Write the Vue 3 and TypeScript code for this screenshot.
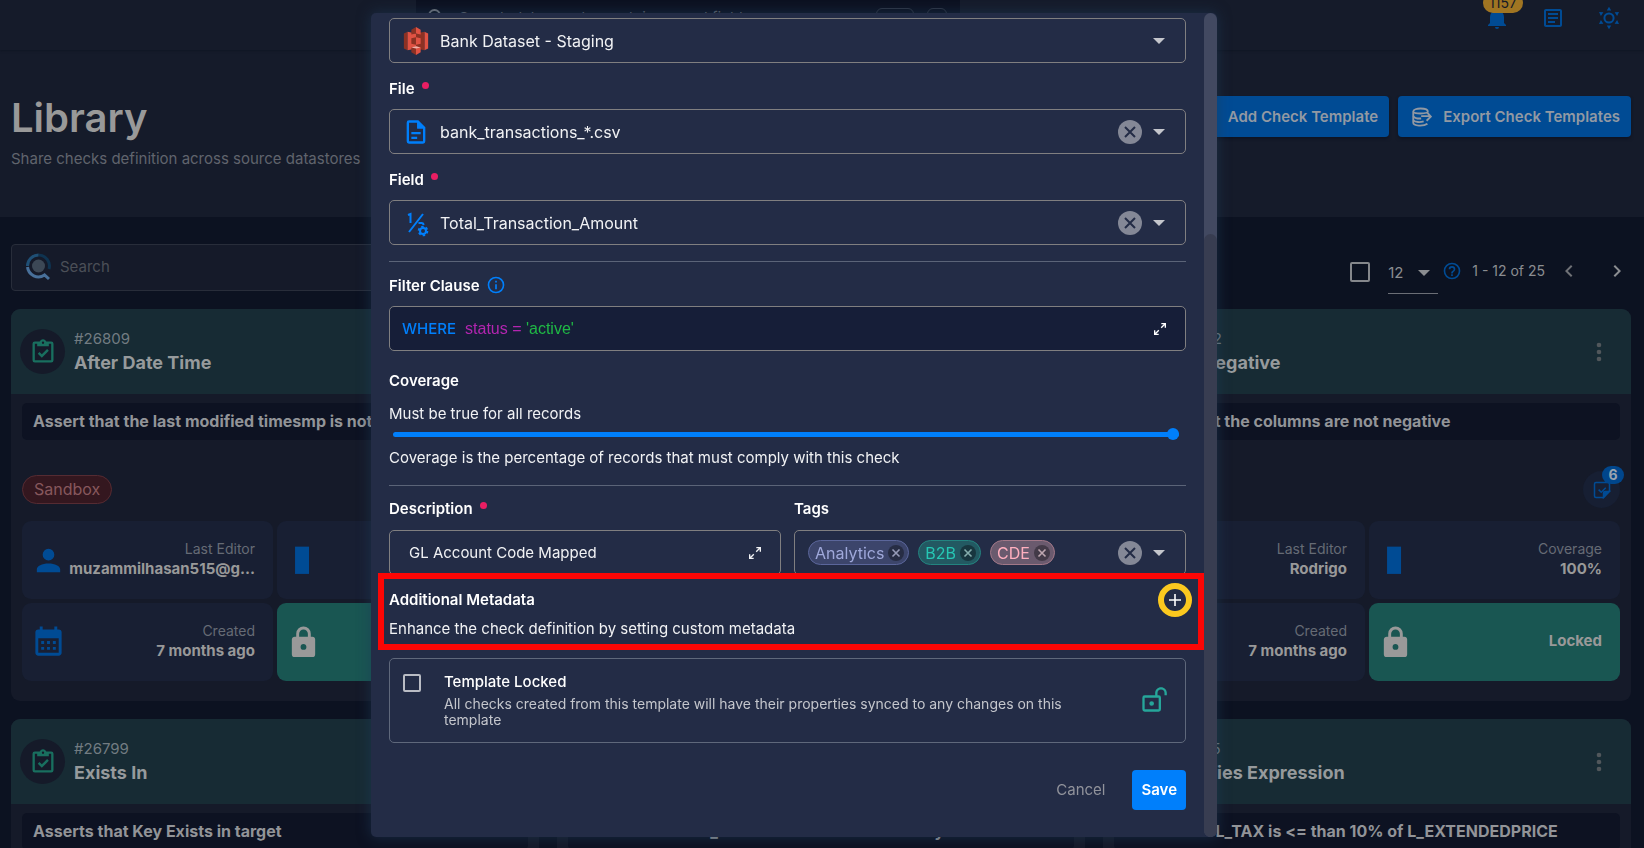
<script setup lang="ts">
import { ref } from 'vue'

interface Tile {
  icon: 'account' | 'bar' | 'calendar' | 'lock'
  label?: string
  value: string
  locked?: boolean
}

interface CheckCard {
  id: string
  title: string
  text: string
  tag?: string
  count?: number
  tiles: Tile[]
}

interface Tag {
  name: string
  tone: string
}

const icons = {
  account: 'M12,4A4,4 0 0,1 16,8A4,4 0 0,1 12,12A4,4 0 0,1 8,8A4,4 0 0,1 12,4M12,14C16.42,14 20,15.79 20,18V20H4V18C4,15.79 7.58,14 12,14Z',
  calendar: 'M7,11H9V13H7V11M21,5V19C21,20.11 20.11,21 19,21H5C3.89,21 3,20.1 3,19V5A2,2 0 0,1 5,3H6V1H8V3H16V1H18V3H19A2,2 0 0,1 21,5M5,19H19V9H5V19M15,13V11H17V13H15M11,13V11H13V13H11M7,15H9V17H7V15M15,17V15H17V17H15M11,17V15H13V17H11Z',
  lock: 'M12,17A2,2 0 0,0 14,15C14,13.89 13.1,13 12,13A2,2 0 0,0 10,15A2,2 0 0,0 12,17M18,8A2,2 0 0,1 20,10V20A2,2 0 0,1 18,22H6A2,2 0 0,1 4,20V10C4,8.89 4.9,8 6,8H7V6A5,5 0 0,1 12,1A5,5 0 0,1 17,6V8H18M12,3A3,3 0 0,0 9,6V8H15V6A3,3 0 0,0 12,3Z',
  bar: 'M6.2 2.5H15.8V21.2H6.2Z',
  clipboard: 'M19,3H14.82C14.4,1.84 13.3,1 12,1C10.7,1 9.6,1.84 9.18,3H5A2,2 0 0,0 3,5V19A2,2 0 0,0 5,21H19A2,2 0 0,0 21,19V5A2,2 0 0,0 19,3M12,3A1,1 0 0,1 13,4A1,1 0 0,1 12,5A1,1 0 0,1 11,4A1,1 0 0,1 12,3M7,7H17V5H19V19H5V5H7V7M7.5,13.5L9,12L11,14L15.5,9.5L17,11L11,17L7.5,13.5Z',
  dots: 'M12,16A2,2 0 0,1 14,18A2,2 0 0,1 12,20A2,2 0 0,1 10,18A2,2 0 0,1 12,16M12,10A2,2 0 0,1 14,12A2,2 0 0,1 12,14A2,2 0 0,1 10,12A2,2 0 0,1 12,10M12,4A2,2 0 0,1 14,6A2,2 0 0,1 12,8A2,2 0 0,1 10,6A2,2 0 0,1 12,4Z',
  expand: 'M10,21V19H6.41L10.91,14.5L9.5,13.09L5,17.59V14H3V21H10M14.5,10.91L19,6.41V10H21V3H14V5H17.59L13.09,9.5L14.5,10.91Z',
  bell: 'M21,19V20H3V19L5,17V11C5,7.9 7.03,5.17 10,4.29V4A2,2 0 0,1 14,4V4.29C16.97,5.17 19,7.9 19,11V17L21,19M14,21A2,2 0 0,1 10,21',
  news: 'M5,3C3.89,3 3,3.89 3,5V19C3,20.11 3.89,21 5,21H19C20.11,21 21,20.11 21,19V5C21,3.89 20.11,3 19,3H5M5,5H19V19H5V5M7,7V9H17V7H7M7,11V13H17V11H7M7,15V17H14V15H7Z',
  unlock: 'M18,1C15.24,1 13,3.24 13,6V8H4A2,2 0 0,0 2,10V20A2,2 0 0,0 4,22H16A2,2 0 0,0 18,20V10A2,2 0 0,0 16,8H15V6A3,3 0 0,1 18,3A3,3 0 0,1 21,6V8H23V6C23,3.24 20.76,1 18,1M4,10H16V20H4V10M10,13A2,2 0 0,0 8,15A2,2 0 0,0 10,17A2,2 0 0,0 12,15A2,2 0 0,0 10,13Z',
  info: 'M11,9H13V7H11M12,20C7.59,20 4,16.41 4,12C4,7.59 7.59,4 12,4C16.41,4 20,7.59 20,12C20,16.41 16.41,20 12,20M12,2A10,10 0 0,0 2,12A10,10 0 0,0 12,22A10,10 0 0,0 22,12A10,10 0 0,0 12,2M11,17H13V11H11V17Z',
  help: 'M11,18H13V16H11V18M12,2A10,10 0 0,0 2,12A10,10 0 0,0 12,22A10,10 0 0,0 22,12A10,10 0 0,0 12,2M12,20C7.59,20 4,16.41 4,12C4,7.59 7.59,4 12,4C16.41,4 20,7.59 20,12C20,16.41 16.41,20 12,20M12,6A4,4 0 0,0 8,10H10A2,2 0 0,1 12,8A2,2 0 0,1 14,10C14,12 11,11.75 11,15H13C13,12.75 16,12.5 16,10A4,4 0 0,0 12,6Z',
  file: 'M6,2A2,2 0 0,0 4,4V20A2,2 0 0,0 6,22H18A2,2 0 0,0 20,20V8L14,2H6M6,4H13V9H18V20H6V4M8,12V14H16V12H8M8,16V18H13V16H8Z',
  left: 'M15.41,16.58L10.83,12L15.41,7.41L14,6L8,12L14,18L15.41,16.58Z',
  right: 'M8.59,16.58L13.17,12L8.59,7.41L10,6L16,12L10,18L8.59,16.58Z',
  magnify: 'M9.5,3A6.5,6.5 0 0,1 16,9.5C16,11.11 15.41,12.59 14.44,13.73L14.71,14H15.5L20.5,19L19,20.5L14,15.5V14.71L13.73,14.44C12.59,15.41 11.11,16 9.5,16A6.5,6.5 0 0,1 3,9.5A6.5,6.5 0 0,1 9.5,3M9.5,5C7,5 5,7 5,9.5C5,12 7,14 9.5,14C12,14 14,12 14,9.5C14,7 12,5 9.5,5Z',
}

const makeTiles = (editor: string): Tile[] => [
  { icon: 'account', label: 'Last Editor', value: editor },
  { icon: 'bar', label: 'Coverage', value: '100%' },
  { icon: 'calendar', label: 'Created', value: '7 months ago' },
  { icon: 'lock', value: 'Locked', locked: true },
]

const cards: CheckCard[] = [
  { id: '#26809', title: 'After Date Time', text: 'Assert that the last modified timesmp is not after today', tag: 'Sandbox', tiles: makeTiles('muzammilhasan515@g...') },
  { id: '#26806', title: 'Between', text: 'Asserts that values are between the range', tiles: makeTiles('Rodrigo') },
  { id: '#26802', title: 'Not Negative', text: 'Asserts that the columns are not negative', count: 6, tiles: makeTiles('Rodrigo') },
  { id: '#26799', title: 'Exists In', text: 'Asserts that Key Exists in target', tiles: makeTiles('Rodrigo') },
  { id: '#26797', title: 'Expected Values', text: 'Assert that the O_ORDERSTATUS contains only known values', tiles: makeTiles('Rodrigo') },
  { id: '#26795', title: 'Satisfies Expression', text: 'Assert that L_TAX is <= than 10% of L_EXTENDEDPRICE', tiles: makeTiles('Rodrigo') },
]

const tags = ref<Tag[]>([
  { name: 'Analytics', tone: 'indigo' },
  { name: 'B2B', tone: 'teal' },
  { name: 'CDE', tone: 'rose' },
])

const query = ref('')
const globalQuery = ref('')
const perPage = ref('12')
const selectAll = ref(false)
const dataset = ref('Bank Dataset - Staging')
const file = ref('bank_transactions_*.csv')
const field = ref('Total_Transaction_Amount')
const coverage = ref(100)
const description = ref('GL Account Code Mapped')
const locked = ref(false)

const removeTag = (name: string) => {
  tags.value = tags.value.filter((t) => t.name !== name)
}
</script>

<template>
  <div class="page">
    <header class="topbar">
      <div class="global">
        <svg class="i24" viewBox="0 0 24 24"><path :d="icons.magnify" /></svg>
        <input v-model="globalQuery" type="text" aria-label="Global search" placeholder="Search data assets, containers and fields" />
        <kbd>Ctrl</kbd><kbd>K</kbd>
      </div>
      <nav class="actions">
        <button type="button" aria-label="Notifications" class="bell">
          <svg class="i24" viewBox="0 0 24 24"><path :d="icons.bell" /></svg>
          <span class="alerts">1157</span>
        </button>
        <button type="button" aria-label="News">
          <svg class="i24" viewBox="0 0 24 24"><path :d="icons.news" /></svg>
        </button>
        <button type="button" aria-label="Theme">
          <svg class="i24" viewBox="0 0 24 24">
            <circle cx="12" cy="12" r="4.6" fill="none" stroke="currentColor" stroke-width="2" />
            <path d="M12 .8L14.2 4.4H9.8ZM12 23.2L14.2 19.6H9.8ZM2 6L6.4 6.2L3.9 10ZM22 6L17.6 6.2L20.1 10ZM2 18L6.4 17.8L3.9 14ZM22 18L17.6 17.8L20.1 14Z" />
          </svg>
        </button>
      </nav>
    </header>

    <section class="hero">
      <div>
        <h1>Library</h1>
        <p>Share checks definition across source datastores</p>
      </div>
      <div class="hero-buttons">
        <button type="button" class="primary">
          <svg class="i20" viewBox="0 0 24 24"><path d="M11 4h2v7h7v2h-7v7h-2v-7H4v-2h7z" /></svg>
          Add Check Template
        </button>
        <button type="button" class="primary">
          <svg class="i20" viewBox="0 0 24 24" fill="none" stroke="currentColor" stroke-width="2.2">
            <path d="M1.500 5.500C1.500 .5 19 .5 19 5.500C19 8.500 1.500 8.500 1.500 5.500V19C1.500 23 14 23.500 18.500 20" />
            <path d="M1.500 11C3 13.500 7 14 11 13.800M1.500 16C4 18.500 10 18.500 14 17.200M11 11H22M18 6.500L22.500 11.500L17.500 16.500" />
          </svg>
          Export Check Templates
        </button>
      </div>
    </section>

    <main class="library">
      <div class="toolbar">
        <label class="search">
          <svg class="logo" viewBox="0 0 26 28">
            <circle cx="12.500" cy="13" r="6.500" fill="#3c4856" />
            <path d="M12.500 2A11 11 0 0 1 23 16" fill="none" stroke="#0f3350" stroke-width="3" />
            <path d="M1.500 13A11 11 0 0 1 12.500 2" fill="none" stroke="#1f4f75" stroke-width="3" />
            <path d="M1.500 14A11 11 0 0 0 18.500 22L23 26" fill="none" stroke="#48709a" stroke-width="3" />
          </svg>
          <input v-model="query" type="text" placeholder="Search" aria-label="Search" />
        </label>
        <div class="pager">
          <input v-model="selectAll" type="checkbox" class="box box-lg" aria-label="Select all" />
          <label class="per-page">
            <select v-model="perPage" aria-label="Items per page"><option>12</option><option>24</option></select>
            <span class="caret"></span>
          </label>
          <svg class="i20 help" viewBox="0 0 24 24"><path :d="icons.help" /></svg>
          <span class="range">1 - 12 of 25</span>
          <button type="button" aria-label="Previous" class="prev"><svg class="i24" viewBox="0 0 24 24"><path :d="icons.left" /></svg></button>
          <button type="button" aria-label="Next"><svg class="i24" viewBox="0 0 24 24"><path :d="icons.right" /></svg></button>
        </div>
      </div>

      <div class="grid">
        <article v-for="card in cards" :key="card.id" class="card">
          <header>
            <span class="avatar"><svg viewBox="0 0 24 24"><path :d="icons.clipboard" /></svg></span>
            <div class="heading">
              <span>{{ card.id }}</span>
              <h2>{{ card.title }}</h2>
            </div>
            <button type="button" aria-label="More"><svg viewBox="0 0 24 24"><path :d="icons.dots" /></svg></button>
          </header>
          <div class="card-body">
            <p class="statement">{{ card.text }}</p>
            <div class="meta">
              <span v-if="card.tag" class="sandbox">{{ card.tag }}</span>
              <span v-if="card.count" class="checks">
                <svg viewBox="0 0 24 24" fill="none" stroke="currentColor" stroke-width="2">
                  <path d="M22 13V4a2 2 0 0 0-2-2H4a2 2 0 0 0-2 2v16a2 2 0 0 0 2 2h10zM7.500 11.500L11 15l6-6" />
                  <path d="M14 22v-6a2 2 0 0 1 2-2h6z" fill="currentColor" />
                </svg>
                <b>{{ card.count }}</b>
              </span>
            </div>
            <div class="tiles">
              <div v-for="tile in card.tiles" :key="tile.value" class="tile" :class="{ locked: tile.locked }">
                <svg viewBox="0 0 24 24"><path :d="icons[tile.icon]" /></svg>
                <div>
                  <span v-if="tile.label">{{ tile.label }}</span>
                  <strong>{{ tile.value }}</strong>
                </div>
              </div>
            </div>
          </div>
        </article>
      </div>
    </main>

    <div class="overlay">
      <form class="dialog" role="dialog" aria-label="Check template" @submit.prevent>
        <div class="content">
          <div class="control">
            <svg class="lead" viewBox="0 0 28 30">
              <path d="M1 7L5 5V25L1 23Z" fill="#8c3123" /><path d="M5 5L14 7V23L5 25Z" fill="#e05243" />
              <path d="M27 7L23 5V25L27 23Z" fill="#e05243" /><path d="M23 5L14 7V23L23 25Z" fill="#8c3123" />
              <path d="M14 0L9 3V8L14 7Z" fill="#8c3123" /><path d="M14 0L19 3V8L14 7Z" fill="#e05243" />
              <path d="M9 12L14 11V19L9 18Z" fill="#8c3123" /><path d="M14 11L19 12V18L14 19Z" fill="#e05243" />
              <path d="M9 22L14 21V30L9 27Z" fill="#8c3123" /><path d="M14 21L19 22V27L14 30Z" fill="#e05243" />
              <path d="M9 22L14 20.500L19 22L14 23Z" fill="#f2b0a9" />
            </svg>
            <select v-model="dataset" aria-label="Datastore"><option>Bank Dataset - Staging</option></select>
            <span class="caret"></span>
          </div>

          <label class="label" for="file">File<i></i></label>
          <div class="control">
            <svg class="lead blue" viewBox="0 0 24 24"><path :d="icons.file" /><path d="M13 3L19 9H13Z" /></svg>
            <select id="file" v-model="file"><option>bank_transactions_*.csv</option></select>
            <button type="button" class="clear" aria-label="Clear file"><svg viewBox="0 0 24 24"><circle cx="12" cy="12" r="12" /><path d="M7 7L17 17M17 7L7 17" /></svg></button>
            <span class="caret"></span>
          </div>

          <label class="label" for="field">Field<i></i></label>
          <div class="control">
            <svg class="lead blue" viewBox="0 0 28 28" fill="none" stroke="currentColor" stroke-width="2">
              <path d="M6 6L8.500 5V14M21 5L7 23M16.500 14H19.500A2 2 0 0 1 21.500 16" />
              <circle cx="21" cy="22" r="3" /><circle cx="21" cy="22" r="4.300" stroke-dasharray="2.400 2.100" />
            </svg>
            <select id="field" v-model="field"><option>Total_Transaction_Amount</option></select>
            <button type="button" class="clear" aria-label="Clear field"><svg viewBox="0 0 24 24"><circle cx="12" cy="12" r="12" /><path d="M7 7L17 17M17 7L7 17" /></svg></button>
            <span class="caret"></span>
          </div>

          <hr class="first" />

          <div id="filter-label" class="label filter">
            Filter Clause
            <svg class="i20 blue" viewBox="0 0 24 24"><path :d="icons.info" /></svg>
          </div>
          <div class="control clause">
            <span class="where">WHERE</span>
            <div class="code" role="textbox" contenteditable="true" aria-labelledby="filter-label"><span class="name">status = </span><span class="string">'active'</span></div>
            <button type="button" class="expand" aria-label="Expand"><svg viewBox="0 0 24 24"><path :d="icons.expand" /></svg></button>
          </div>

          <label class="label coverage" for="coverage">Coverage</label>
          <p>Must be true for all records</p>
          <input id="coverage" v-model="coverage" class="slider" type="range" min="0" max="100" />
          <p>Coverage is the percentage of records that must comply with this check</p>

          <hr class="second" />

          <div class="pair">
            <div>
              <label class="label after-rule" for="description">Description<i></i></label>
              <div class="control describe">
                <input id="description" v-model="description" type="text" />
                <button type="button" class="expand" aria-label="Expand"><svg viewBox="0 0 24 24"><path :d="icons.expand" /></svg></button>
              </div>
            </div>
            <div>
              <div class="label after-rule">Tags</div>
              <div class="control tagbox">
                <span v-for="tag in tags" :key="tag.name" class="chip" :class="tag.tone">
                  {{ tag.name }}
                  <button type="button" :aria-label="'Remove ' + tag.name" @click="removeTag(tag.name)">
                    <svg viewBox="0 0 10 10"><path d="M1.500 1.500L8.500 8.500M8.500 1.500L1.500 8.500" stroke="currentColor" stroke-width="1.600" /></svg>
                  </button>
                </span>
                <span class="fill"></span>
                <button type="button" class="clear" aria-label="Clear tags"><svg viewBox="0 0 24 24"><circle cx="12" cy="12" r="12" /><path d="M7 7L17 17M17 7L7 17" /></svg></button>
                <span class="caret"></span>
              </div>
            </div>
          </div>

          <section class="metadata">
            <div class="metadata-title">
              <h3>Additional Metadata</h3>
              <button type="button" aria-label="Add metadata">
                <svg viewBox="0 0 12 12"><path d="M6 0V12M0 6H12" stroke="currentColor" stroke-width="1.600" /></svg>
              </button>
            </div>
            <p>Enhance the check definition by setting custom metadata</p>
          </section>

          <label class="template" for="locked">
            <input id="locked" v-model="locked" type="checkbox" class="box" />
            <span class="template-text">
              <strong>Template Locked</strong>
              <small>All checks created from this template will have their properties synced to any changes on this template</small>
            </span>
            <svg viewBox="0 0 24 24"><path :d="icons.unlock" /></svg>
          </label>

          <footer>
            <button type="button" class="cancel">Cancel</button>
            <button type="submit" class="save">Save</button>
          </footer>
        </div>
        <div class="scrollbar"><div></div></div>
      </form>
    </div>
  </div>
</template>

<style>
body {
  background: #0c1221;
  overflow: hidden;
}
</style>

<style scoped>
.page {
  height: 100vh;
  overflow: hidden;
  color: #999;
  font-family: Inter, "Liberation Sans", sans-serif;
  font-size: 15px;
  line-height: 24px;
}
.page * { box-sizing: border-box; }
h1, h2, h3, p { margin: 0; }
button, input, select {
  margin: 0;
  padding: 0;
  border: 0;
  background: none;
  color: inherit;
  font: inherit;
  outline: none;
  appearance: none;
}
button { display: flex; align-items: center; justify-content: center; }
svg { display: block; flex: none; fill: currentColor; }
svg[fill="none"] { fill: none; }
.i20 { width: 20px; height: 20px; }
.i24 { width: 24px; height: 24px; }
.blue { color: #007ffb; }
.caret {
  flex: none;
  border: 6px solid transparent;
  border-top-color: currentColor;
  border-bottom: 0;
}
.box {
  flex: none;
  width: 18px;
  height: 18px;
  border: 2px solid #b9bcc4;
  border-radius: 2px;
}
.box-lg { width: 20px; height: 20px; border-color: #85878c; }

.topbar {
  position: relative;
  display: flex;
  justify-content: flex-end;
  height: 50px;
  padding-right: 23px;
  background: #151b2a;
  box-shadow: 0 1px 2px #101624;
}
.global {
  display: flex;
  align-items: center;
  width: 544px;
  height: 36px;
  margin-right: 525px;
  padding: 0 13px 0 9px;
  background: #0c1120;
  color: #74777e;
}
.global svg { margin-right: 10px; }
.global input { flex: 1; }
.global input::placeholder { color: #5b5f68; opacity: 1; }
kbd {
  height: 20px;
  margin-left: 13px;
  padding: 0 8px;
  border: 1px solid #303644;
  border-radius: 6px;
  font: 12px/18px Inter, sans-serif;
}
kbd:last-child { padding: 0 5px; }
.actions {
  display: flex;
  align-items: center;
  gap: 32px;
  height: 36px;
  color: #004b94;
}
.bell { position: relative; }
.alerts {
  position: absolute;
  left: -2px;
  bottom: 17px;
  width: 40px;
  height: 20px;
  border-radius: 10px;
  background: #a07522;
  color: #171b26;
  font-size: 14px;
  line-height: 20px;
  text-align: center;
}
.hero {
  display: flex;
  justify-content: space-between;
  align-items: flex-start;
  height: 167px;
  padding: 42px 13px 0 11px;
  background: #151b2a;
}
.hero h1 { color: #999; font-size: 40px; font-weight: 600; line-height: 52px; }
.hero p { margin-top: 3px; color: #60646d; font-size: 15px; }
.hero-buttons { display: flex; gap: 9px; margin-top: 4px; }
.primary {
  gap: 11px;
  height: 41px;
  padding: 0 11px 0 14px;
  border-radius: 4px;
  background: #004b94;
  color: #9299a3;
  font-weight: 600;
  box-shadow: 0 2px 3px #0e1422;
}
.library { padding: 27px 13px 0 11px; background: #0c1221; }
.toolbar { display: flex; justify-content: space-between; height: 47px; }
.search {
  display: flex;
  align-items: center;
  gap: 8px;
  width: 528px;
  padding: 0 0 2px 14px;
  border: 1px solid #282d3a;
  border-radius: 4px;
  background: #151a29;
}
.search .logo { width: 26px; height: 28px; }
.search input { flex: 1; }
.search input::placeholder { color: #4b4f57; opacity: 1; }
.pager { display: flex; align-items: center; height: 50px; padding: 8px 2px 0 0; color: #8b8d91; }
.per-page {
  display: flex;
  align-items: center;
  width: 50px;
  height: 42px;
  margin: 0 4px 0 18px;
  padding-right: 8px;
  border-bottom: 1px solid #6b6e76;
}
.per-page select { flex: 1; width: 10px; }
.help { margin-right: 10px; color: #004b94; }
.range { margin-right: 12px; font-size: 14px; }
.prev { margin-right: 24px; color: #6f7176; }
.pager .box { margin-top: -2px; }
.pager .i20, .pager .range, .pager button { margin-top: -4px; }

.grid {
  display: grid;
  grid-template-columns: repeat(3, minmax(0, 1fr));
  gap: 18px;
  margin-top: 18px;
}
.card { overflow: hidden; border-radius: 9px; background: #151a29; }
.card > header {
  display: flex;
  align-items: center;
  height: 85px;
  padding: 0 18px 0 9px;
  background: #172b34;
}
.avatar {
  display: grid;
  place-items: center;
  width: 45px;
  height: 45px;
  border-radius: 50%;
  background: #151a29;
  color: #196f5f;
}
.avatar svg, .card > header button svg { width: 28px; height: 28px; }
.card > header button { color: #51575b; }
.heading { flex: 1; margin-left: 9px; }
.heading span { display: block; color: #727c82; line-height: 22px; }
.heading h2 { font-size: 18px; font-weight: 700; line-height: 26px; color: #969a9c; }
.card-body { padding: 9px 11px 20px; }
.statement {
  overflow: hidden;
  height: 37px;
  padding: 0 11px;
  border-radius: 5px;
  background: #0d1222;
  color: #929498;
  font-size: 16px;
  font-weight: 700;
  line-height: 37px;
  text-overflow: ellipsis;
  white-space: nowrap;
}
.meta { display: flex; align-items: center; height: 81px; padding-top: 18px; }
.sandbox {
  height: 29px;
  padding: 0 11px;
  border: 1px solid #552b32;
  border-radius: 15px;
  background: #34171f;
  color: #87575d;
  font-size: 16px;
  line-height: 27px;
}
.checks {
  display: grid;
  place-items: center;
  position: relative;
  width: 37px;
  height: 37px;
  margin-left: auto;
  border-radius: 50%;
  background: #171f33;
  color: #004b94;
}
.checks svg { width: 18px; height: 18px; }
.checks b {
  position: absolute;
  right: -4px;
  top: -5px;
  width: 22px;
  height: 18px;
  border-radius: 9px;
  background: #00468c;
  color: #99a4b0;
  font-size: 14px;
  line-height: 18px;
  text-align: center;
}
.tiles { display: grid; grid-template-columns: repeat(2, minmax(0, 1fr)); gap: 4px; }
.tile {
  display: flex;
  align-items: center;
  height: 78px;
  padding: 0 18px 0 9px;
  border-radius: 9px;
  background: #181f33;
  color: #004b94;
}
.tile svg { width: 35px; height: 35px; }
.tile > div { flex: 1; min-width: 0; margin-bottom: 3px; text-align: right; }
.tile span { display: block; color: #666b75; font-size: 14px; line-height: 20px; }
.tile strong {
  display: block;
  overflow: hidden;
  color: #999;
  font-weight: 700;
  line-height: 20px;
  text-overflow: ellipsis;
  white-space: nowrap;
}
.tile.locked { background: #195652; color: #999; }

.overlay {
  position: fixed;
  inset: 0;
  display: flex;
  justify-content: center;
  padding: 13px 56px 11px 0;
}
.dialog {
  display: flex;
  width: 846px;
  overflow: hidden;
  border-radius: 5px;
  background: #232c46;
  box-shadow: 0 0 14px rgba(32, 60, 92, 0.6);
  color: #fff;
}
.content { flex: 1; min-width: 0; padding: 5px 18px 0; }
.scrollbar { width: 13px; padding-top: 221px; border-radius: 7px; background: #424961; }
.scrollbar div { height: 100%; border-radius: 7px; background: #383d51; }
.control {
  display: flex;
  align-items: center;
  height: 45px;
  padding: 0 20px 0 12px;
  border: 1px solid #807f80;
  border-radius: 5px;
}
.control .lead { width: 28px; height: 28px; margin-right: 10px; }
.control select { flex: 1; color: #f1f2f4; font-size: 16px; }
.control .caret { margin-left: 11px; color: #c4c6cc; }
.clear { color: #848896; }
.clear svg { width: 24px; height: 24px; }
.clear path { fill: none; stroke: #232c46; stroke-width: 2; }
.label {
  display: flex;
  align-items: center;
  height: 24px;
  margin: 14px 0 8px;
  font-weight: 600;
}
.label i {
  width: 7px;
  height: 7px;
  margin: 0 0 8px 7px;
  border-radius: 50%;
  background: #e91e63;
}
.label svg { margin: 0 0 2px 6px; }
.content .filter { margin-top: 12px; }
.content .after-rule { margin: 11px 0 9px; }
hr { height: 1px; margin: 0; border: 0; background: #5b6478; }
.first { margin-top: 16px; }
.clause { background: #161e38; }
.where { color: #007ffb; font-weight: 500; margin-right: 9px; }
.code { flex: 1; outline: none; font-family: "Liberation Sans", Arial, sans-serif; font-size: 16px; white-space: pre; }
.name { color: #b325b0; }
.string { color: #1fb845; }
.expand svg { width: 16px; height: 16px; }
.expand { margin-right: -3px; }
.content .coverage { margin: 18px 0 9px; }
.slider { display: block; width: calc(100% - 11px); height: 16px; margin: 0 0 4px 4px; }
.slider::-webkit-slider-runnable-track { height: 5px; border-radius: 3px; background: #007ffb; }
.slider::-webkit-slider-thumb {
  width: 12px;
  height: 12px;
  margin-top: -4px;
  border-radius: 50%;
  background: #007ffb;
  appearance: none;
}
.content p { color: #f1f2f4; }
.second { margin-top: 15px; }
.pair { display: grid; grid-template-columns: 1fr 1fr; gap: 13px; }
.pair .control { color: #f1f2f4; }
.describe { padding: 0 20px 0 19px; }
.describe input { flex: 1; min-width: 0; }
.tagbox { padding-left: 13px; }
.fill { flex: 1; }
.chip {
  display: flex;
  align-items: center;
  gap: 4px;
  height: 25px;
  margin-right: 9px;
  padding: 0 4px 0 6px;
  border: 1px solid;
  border-radius: 13px;
  font-size: 16px;
}
.chip button { width: 16px; height: 16px; border-radius: 50%; }
.chip svg { width: 10px; height: 10px; opacity: 0.7; }
.pair .indigo { border-color: #5b669b; background: #3c456b; color: #9fa8da; }
.indigo button { background: #272d44; color: #c5cae9; }
.pair .teal { border-color: #238480; background: #235962; color: #26c6b4; }
.teal button { background: #18363f; color: #b2dfdb; }
.pair .rose { border-color: #a27888; background: #6a5a6e; color: #ffafbf; }
.rose button { background: #433a48; color: #f3d5dc; }
.metadata {
  position: relative;
  margin: 13px 0 17px;
}
.metadata::before {
  content: "";
  position: absolute;
  inset: -15px -18px -9px -11px;
  border: 6px solid #fb0605;
  pointer-events: none;
}
.metadata-title { display: flex; justify-content: space-between; align-items: center; margin-bottom: 5px; }
.metadata h3 { font-size: 15px; font-weight: 600; line-height: 24px; }
.metadata button { position: relative; width: 22px; height: 22px; }
.metadata button::after {
  content: "";
  position: absolute;
  inset: -6px;
  border: 6px solid #fbc91f;
  border-radius: 50%;
}
.metadata button svg { width: 12px; height: 12px; }
.template {
  display: flex;
  height: 85px;
  padding: 13px 17px 0 13px;
  border: 1px solid #5f687b;
  border-radius: 5px;
}
.template .box { margin-top: 2px; }
.template-text { flex: 1; margin-left: 23px; padding-right: 70px; }
.template strong { display: block; font-weight: 500; line-height: 20px; }
.template small { display: block; padding-top: 4px; color: #c4c6cc; font-size: 14px; line-height: 16px; }
.template svg { width: 28px; height: 28px; margin-top: 14px; color: #26a69a; }
footer { display: flex; justify-content: flex-end; gap: 18px; margin-top: 27px; }
footer button { height: 40px; padding: 0 9px; border-radius: 4px; }
.cancel { color: #91939b; }
.save { background: #007ffb; font-weight: 600; }
</style>
